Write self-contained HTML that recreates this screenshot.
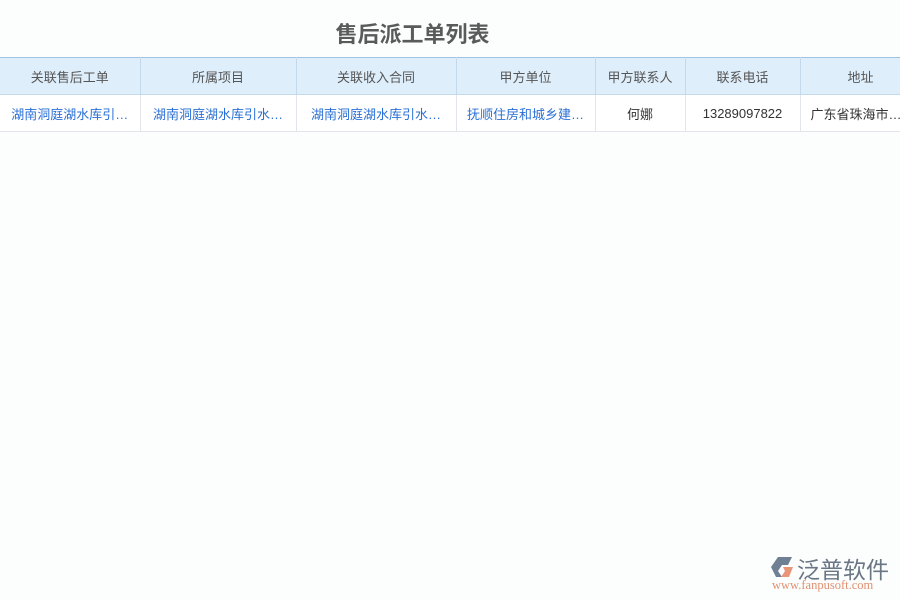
<!DOCTYPE html><html><head><meta charset="utf-8"><style>
body{margin:0;width:900px;height:600px;background:#fcfefe;font-family:"Liberation Sans","Noto Sans CJK SC",sans-serif;position:relative;overflow:hidden}
.t{position:absolute;left:0;width:825px;top:17px;text-align:center;font-size:22px;font-weight:bold;color:#5a5a5a}
table{position:absolute;top:57px;left:0;border-collapse:collapse;table-layout:fixed;width:920px;font-size:13px}
th{height:34px;padding:1px 0;background:#deeefb;color:#555;font-weight:normal;border:1px solid #c4d9ec;border-top:1px solid #9fc3e3}
td{height:34px;padding:1px 0;border:1px solid #e2e6ea;text-align:center;white-space:nowrap;overflow:hidden;color:#333;background:#fff}
td.b{color:#2a6fd6}
.logo{position:absolute;left:770px;top:553px}
</style></head><body>
<div class="t">售后派工单列表</div>
<table><colgroup><col style="width:140px"><col style="width:156px"><col style="width:160px"><col style="width:139px"><col style="width:90px"><col style="width:115px"><col style="width:120px"></colgroup>
<tr><th style="border-left:none">关联售后工单</th><th>所属项目</th><th>关联收入合同</th><th>甲方单位</th><th>甲方联系人</th><th>联系电话</th><th style="text-align:left;padding-left:47px">地址</th></tr>
<tr><td class="b" style="border-left:none">湖南洞庭湖水库引…</td><td class="b">湖南洞庭湖水库引水…</td><td class="b">湖南洞庭湖水库引水…</td><td class="b">抚顺住房和城乡建…</td><td>何娜</td><td>13289097822</td><td style="text-align:left;padding-left:10px">广东省珠海市…</td></tr>
</table>
<div class="logo">
<svg width="26" height="24" style="position:absolute;left:0;top:2px"><path d="M8 2h14l-4 8H12l-4 6 4 6H6L1 12z" fill="#6f7f94"/><path d="M13 12h10l-4 10h-8l4-6z" fill="#e8957a"/></svg>
<div style="position:absolute;left:27px;top:-2px;font-size:23px;color:#6b7685;white-space:nowrap">泛普软件</div>
<div style="position:absolute;left:2px;top:25px;font-size:12.5px;color:#e0906f;font-family:'Liberation Serif',serif;white-space:nowrap">www.fanpusoft.com</div>
</div>
</body></html>
